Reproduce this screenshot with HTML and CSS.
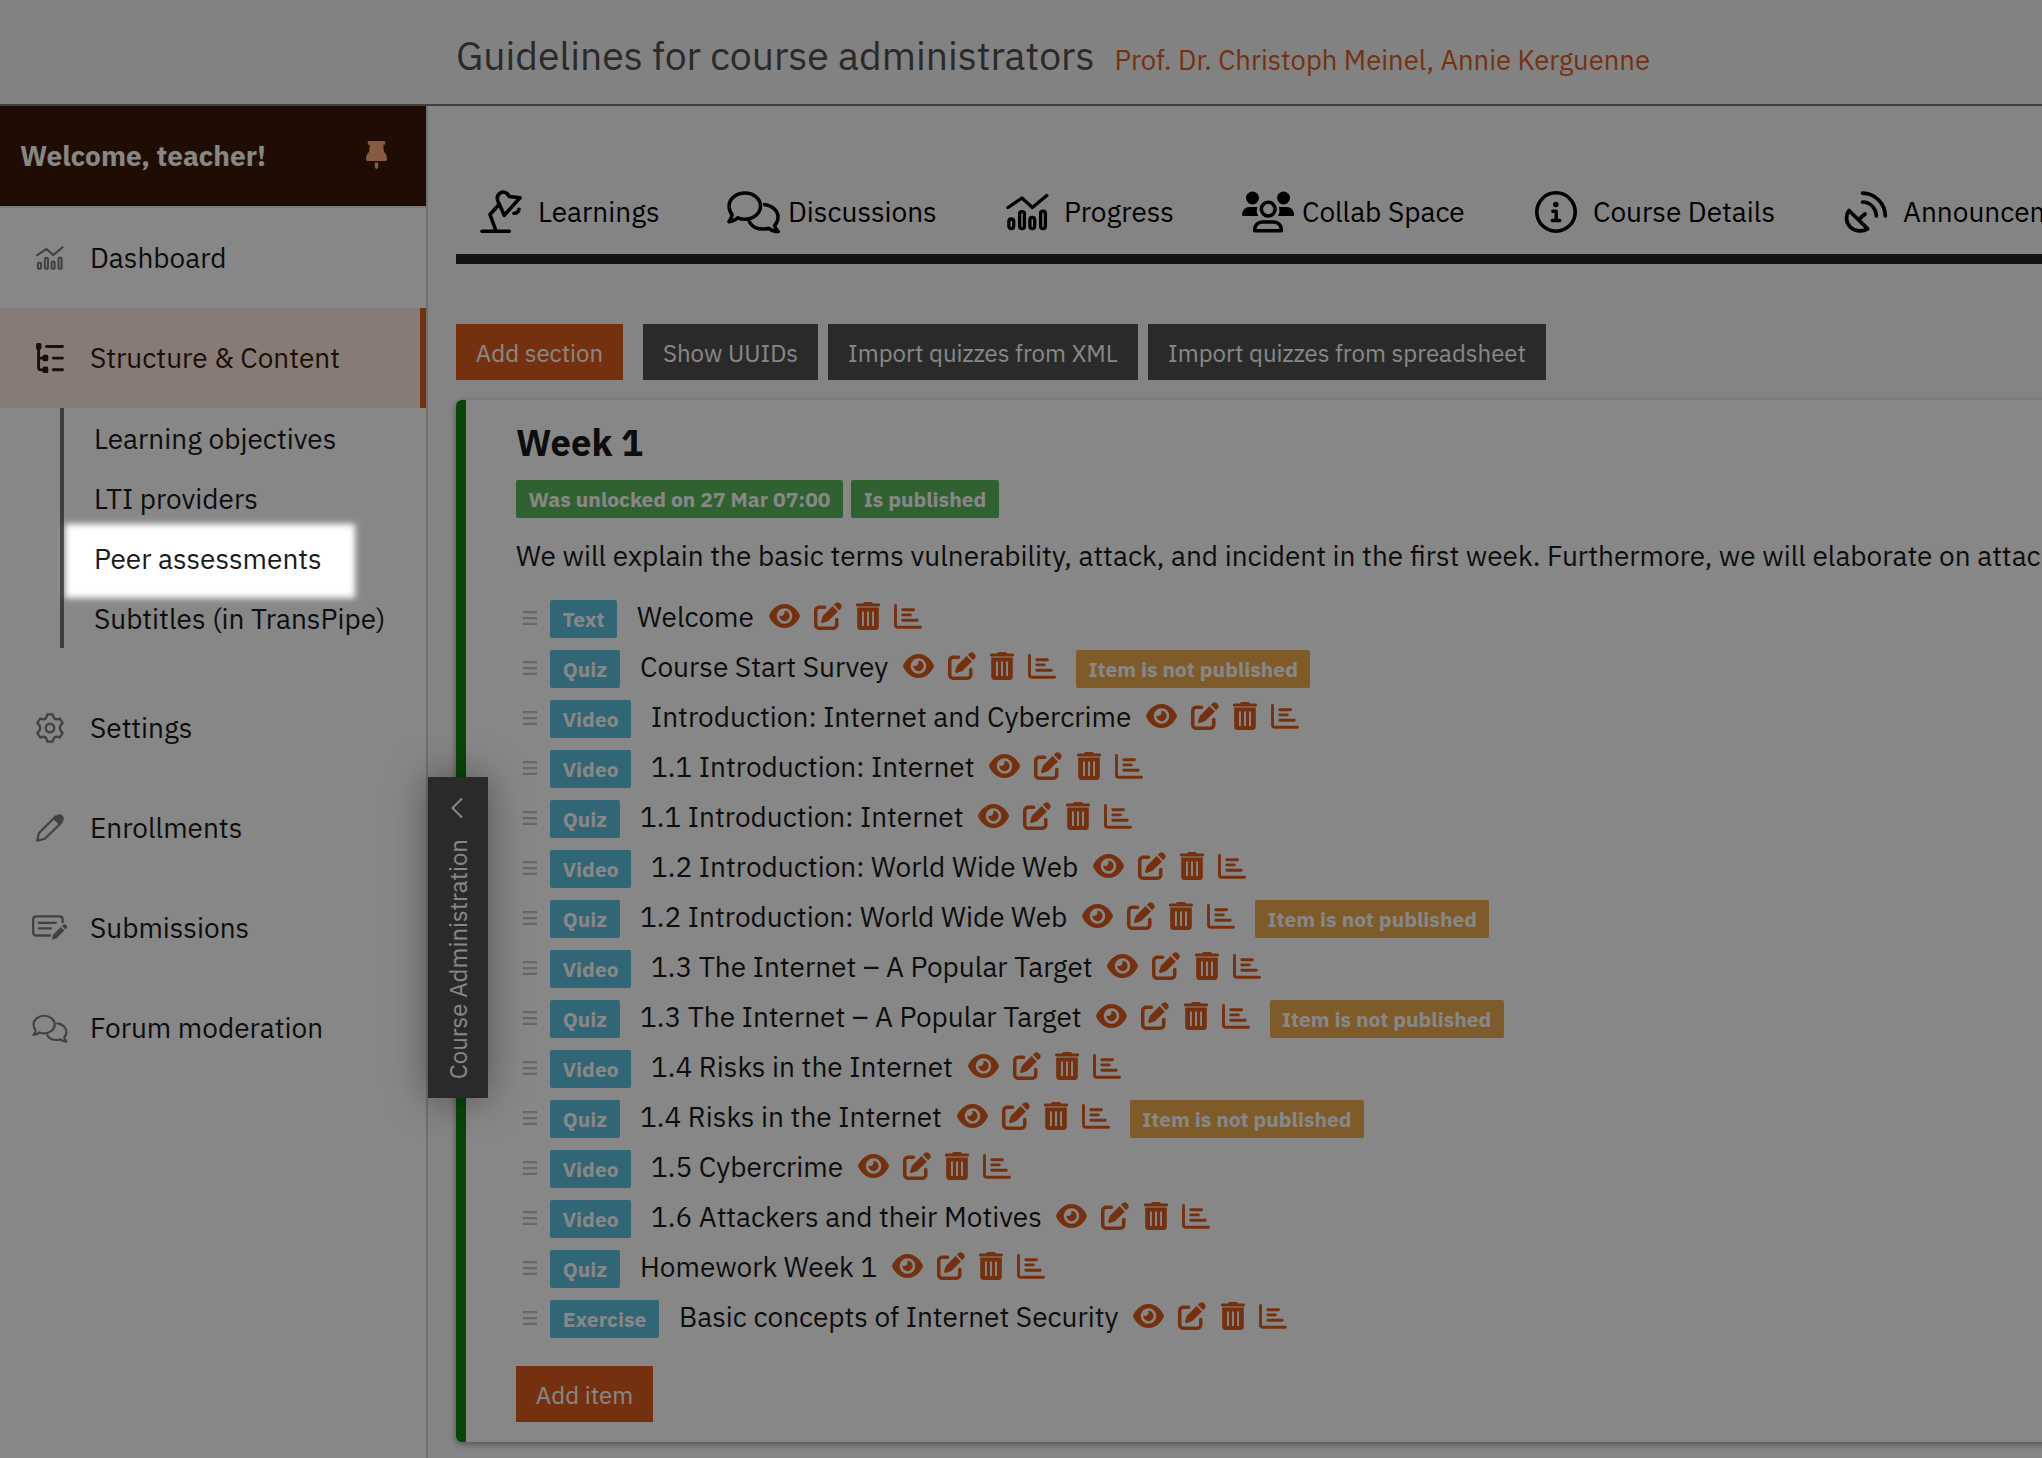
FILE: index.html
```html
<!DOCTYPE html>
<html lang="en">
<head>
<meta charset="utf-8">
<title>Guidelines for course administrators</title>
<link rel="stylesheet" href="styles.css">
</head>
<body>
<svg class="sprite" aria-hidden="true">
  <symbol id="i-eye" viewBox="0 0 576 512"><path d="M288 32c-80.8 0-145.5 36.8-192.6 80.6C48.6 156 17.3 208 2.5 243.7c-3.3 7.9-3.3 16.7 0 24.6C17.3 304 48.6 356 95.4 399.4C142.5 443.2 207.2 480 288 480s145.5-36.8 192.6-80.6c46.8-43.5 78.1-95.4 93-131.1c3.3-7.9 3.3-16.7 0-24.6c-14.9-35.7-46.2-87.7-93-131.1C433.5 68.8 368.8 32 288 32zM144 256a144 144 0 1 1 288 0 144 144 0 1 1 -288 0zm144-64c0 35.3-28.7 64-64 64c-7.1 0-13.9-1.2-20.3-3.3c-5.5-1.8-11.9 1.6-11.7 7.4c.3 6.9 1.3 13.8 3.2 20.7c13.7 51.2 66.4 81.6 117.6 67.9s81.6-66.4 67.9-117.6c-11.1-41.5-47.8-69.4-88.6-71.1c-5.8-.2-9.2 6.1-7.4 11.7c2.1 6.4 3.3 13.2 3.3 20.3z"/></symbol>
  <symbol id="i-edit" viewBox="0 0 512 512"><path d="M471.6 21.7c-21.9-21.9-57.3-21.9-79.2 0L362.3 51.7l97.9 97.9 30.1-30.1c21.9-21.9 21.9-57.3 0-79.2L471.6 21.7zm-299.2 220c-6.1 6.1-10.8 13.6-13.5 21.9l-29.6 88.8c-2.9 8.6-.6 18.1 5.8 24.6s15.9 8.7 24.6 5.8l88.8-29.6c8.2-2.7 15.7-7.4 21.9-13.5L437.7 172.3 339.7 74.3 172.4 241.7zM96 64C43 64 0 107 0 160V416c0 53 43 96 96 96H352c53 0 96-43 96-96V320c0-17.7-14.3-32-32-32s-32 14.3-32 32v96c0 17.7-14.3 32-32 32H96c-17.7 0-32-14.3-32-32V160c0-17.7 14.3-32 32-32h96c17.7 0 32-14.3 32-32s-14.3-32-32-32H96z"/></symbol>
  <symbol id="i-trash" viewBox="0 0 24 28"><path fill-rule="evenodd" d="M8.600 0h6.800q.9 0 1.200.7l.4.8h5.700a1.300 1.300 0 0 1 0 2.900H1.300a1.300 1.300 0 0 1 0-2.900H7l.4-.8Q7.700 0 8.600 0zM1.200 5.600h21.600V24.500a3.500 3.500 0 0 1-3.500 3.500H4.700a3.500 3.500 0 0 1-3.500-3.500zM6 9.500v14.500h1.900V9.500zM11.050 9.500v14.500h1.900V9.500zM16.100 9.500v14.500h1.900V9.500z"/></symbol>
  <symbol id="i-bars" viewBox="0 0 28 25"><path fill="none" stroke="currentColor" stroke-width="2.900" stroke-linecap="round" stroke-linejoin="round" d="M1.500 1.500V21q0 2.300 2.300 2.300H26.500M8.800 5.700H19.500M8.800 10.900H16.300M8.800 16.300H23.300"/></symbol>
  <symbol id="i-handle" viewBox="0 0 14 14"><path d="M0 0h14v2.300H0zM0 5.900h14v2.300H0zM0 11.700h14V14H0z"/></symbol>
  <symbol id="i-chart" viewBox="0 0 43 40"><g fill="none" stroke="currentColor" stroke-linecap="round" stroke-linejoin="round"><path d="M2 15.500L16 6l10.300 9.500L40.800 3.500"/><rect x="2.900" y="27" width="4.800" height="9.600" rx="2.400"/><rect x="13.600" y="19.700" width="4.800" height="16.900" rx="2.400"/><rect x="23.900" y="25.500" width="4.800" height="11.100" rx="2.400"/><rect x="34.600" y="19.200" width="4.800" height="17.400" rx="2.400"/></g></symbol>
  <symbol id="i-chat" viewBox="0 0 54 44"><g fill="none" stroke="currentColor" stroke-linecap="round" stroke-linejoin="round"><path d="M18.200 2.700C27 2.700 34.200 8.600 34.200 16S27 29.300 18.200 29.300c-2.600 0-5-.5-7.100-1.400C8.700 30.100 5.500 31.600 2 31.800c1.800-2.100 3-4.600 3.200-7C3.200 22.400 2.100 19.300 2.100 16 2.100 8.600 9.400 2.700 18.200 2.700z"/><path d="M38.200 14.300C46 15.400 52 20.700 52 27.300c0 3.200-1.300 6-3.500 8.300.4 2.400 1.700 4.600 3.600 6.300-3.700 0-7-1.200-9.500-3.300-1.800.6-3.400.8-5.200.8-6.500 0-12.200-2.600-14.500-7.300"/></g></symbol>
  <symbol id="i-lamp" viewBox="0 0 42 44"><path fill="none" stroke="currentColor" stroke-width="3.600" stroke-linecap="round" stroke-linejoin="round" d="M2 41.300H29.300M15.700 40L10 24.500l9.300-10.300M24.300 25.300L18.500 12.500C16.500 8.500 17.500 5 20 3.200c3.300-2.300 7-1 9.300 3.300L40 7.800 24.300 25.300M39 19.200C38.500 22 36.500 23.300 34 23.200"/></symbol>
  <symbol id="i-group" viewBox="0 0 54 44"><circle cx="10.700" cy="7.700" r="6.600"/><circle cx="42.300" cy="7.700" r="6.600"/><path d="M.2 26v-1.500C.2 20.200 3.400 17 7.600 17h8.200c-1.300 3.200-.9 6.600.9 9zM53 26v-1.500c0-4.300-3.200-7.500-7.400-7.500h-8.200c1.300 3.200.9 6.600-.9 9z"/><g fill="none" stroke="currentColor" stroke-width="3.600" stroke-linejoin="round"><circle cx="26.700" cy="19" r="7"/><path d="M12.900 41.200v-1.500c0-4.200 3.300-7.500 7.500-7.500h12.200c4.200 0 7.500 3.300 7.500 7.500v1.500z"/></g></symbol>
  <symbol id="i-info" viewBox="0 0 42 44"><circle cx="21" cy="22" r="19.200" fill="none" stroke="currentColor" stroke-width="3.600"/><circle cx="20.800" cy="14.500" r="2.700"/><path fill="none" stroke="currentColor" stroke-width="3.400" stroke-linecap="round" stroke-linejoin="round" d="M17.800 21.300h3.400v9M17.300 30.500h7.400"/></symbol>
  <symbol id="i-dish" viewBox="0 0 44 44"><path fill="none" stroke="currentColor" stroke-width="3.700" stroke-linecap="round" stroke-linejoin="round" d="M18.600 3.200A23 23 0 0 1 41.300 26M18.600 12A14 14 0 0 1 32.300 26M5 20.500C1.500 25.500 1.700 32.500 6.200 37c4.600 4.500 12 5.200 17.500 1.900zM14.800 29.500L21 24"/></symbol>
  <symbol id="i-tree" viewBox="0 0 28 30"><rect x="0" y="0" width="5.400" height="6.500" rx="1.500"/><rect x="6.500" y="11.800" width="5.800" height="6.400" rx="1.500"/><rect x="6.500" y="23.600" width="5.800" height="6.400" rx="1.500"/><path fill="none" stroke="currentColor" stroke-width="2.900" stroke-linecap="round" d="M2.600 4V24.500q0 2.400 2.400 2.400H8M2.600 15.100H8M10.500 3.500H26.500M17.300 15.100H26.500M17.300 26.700H26.500"/></symbol>
  <symbol id="i-gear" viewBox="0 0 28 30"><g fill="none" stroke="currentColor" stroke-width="2.400" stroke-linejoin="round"><circle cx="14" cy="15" r="4.300"/><path d="M11.300 1.400h5.400q.6 3.600 2.200 4.500t4.900-.4l2.800 4.700Q23.700 12.600 23.700 15t2.900 4.800l-2.800 4.700q-3.300-1.300-4.900-.4t-2.200 4.500h-5.400q-.6-3.600-2.200-4.500t-4.900.4L1.400 19.800Q4.300 17.400 4.300 15T1.400 10.200l2.800-4.700q3.300 1.300 4.900.4t2.200-4.500z"/></g></symbol>
  <symbol id="i-pencil" viewBox="0 0 28 28"><path fill="none" stroke="currentColor" stroke-width="2.200" stroke-linejoin="round" d="M1.200 26.800l1.600-7.600L19.500 2.500l6 6L8.800 24.700z"/><path d="M17 4.800L20.500 1.500C22-.2 24.500-.2 26 1.300l.7.700c1.500 1.500 1.500 4 0 5.500L23 11z"/></symbol>
  <symbol id="i-note" viewBox="0 0 36 26"><path fill="none" stroke="currentColor" stroke-width="2.300" stroke-linecap="round" d="M18 20.500H4.300Q1.200 20.500 1.200 17.500V4.300Q1.200 1.300 4.300 1.300H27.500Q30.600 1.300 30.600 4.300V7M6.700 7.800H24M6.700 13.300H19"/><path d="M19.800 24.800l1-4.800 8-8 3.600 3.600-8 8zM29.900 10.900l.9-.9c1-1 2.300-1 3.200-.1l.5.500c.9.9.9 2.200-.1 3.200l-.9.900z"/></symbol>
  <symbol id="i-pin" viewBox="0 0 21 28"><path d="M3 0h15q1.300 0 1.300 1.300v1.100q0 1.300-1.300 1.300h-.7l.5 7.100Q21 13.500 21 17.500v1q0 1.400-1.400 1.400H1.400Q0 19.900 0 18.500v-1q0-4 3.200-6.700l.5-7.100H3Q1.700 3.700 1.700 2.400V1.300Q1.700 0 3 0zM8.800 21.500h3.400v4.700q0 1.300-1.700 1.800-1.700-.5-1.700-1.800z"/></symbol>
  <symbol id="i-left" viewBox="0 0 12 20"><path fill="none" stroke="currentColor" stroke-width="2" stroke-linecap="round" stroke-linejoin="round" d="M10.500 1L1.500 10l9 9"/></symbol>
</svg>

<header class="topbar">
  <h1 class="topbar-title">Guidelines for course administrators</h1>
  <span class="topbar-teachers">Prof. Dr. Christoph Meinel, Annie Kerguenne</span>
</header>

<div class="layout">
  <aside class="sidebar">
    <div class="welcome"><span class="welcome-text">Welcome, teacher!</span><svg class="pin"><use href="#i-pin"/></svg></div>
    <nav class="side-nav">
      <a class="side-item"><span class="side-icon"><svg class="ic-chart"><use href="#i-chart"/></svg></span><span class="side-label">Dashboard</span></a>
      <a class="side-item active"><span class="side-icon"><svg class="ic-tree"><use href="#i-tree"/></svg></span><span class="side-label">Structure &amp; Content</span></a>
      <div class="side-sub">
        <a>Learning objectives</a>
        <a>LTI providers</a>
        <a>Peer assessments</a>
        <a>Subtitles (in TransPipe)</a>
      </div>
      <a class="side-item"><span class="side-icon"><svg class="ic-gear"><use href="#i-gear"/></svg></span><span class="side-label">Settings</span></a>
      <a class="side-item"><span class="side-icon"><svg class="ic-pencil"><use href="#i-pencil"/></svg></span><span class="side-label">Enrollments</span></a>
      <a class="side-item"><span class="side-icon"><svg class="ic-note"><use href="#i-note"/></svg></span><span class="side-label">Submissions</span></a>
      <a class="side-item"><span class="side-icon"><svg class="ic-chat"><use href="#i-chat"/></svg></span><span class="side-label">Forum moderation</span></a>
    </nav>
    <div class="drawer-tab"><svg class="drawer-arrow"><use href="#i-left"/></svg><span class="drawer-text">Course Administration</span></div>
  </aside>

  <main class="content">
    <nav class="tabs">
      <a class="tab tab-learnings"><svg><use href="#i-lamp"/></svg><span>Learnings</span></a>
      <a class="tab tab-discussions"><svg><use href="#i-chat"/></svg><span>Discussions</span></a>
      <a class="tab tab-progress"><svg><use href="#i-chart"/></svg><span>Progress</span></a>
      <a class="tab tab-collab"><svg><use href="#i-group"/></svg><span>Collab Space</span></a>
      <a class="tab tab-details"><svg><use href="#i-info"/></svg><span>Course Details</span></a>
      <a class="tab tab-news"><svg><use href="#i-dish"/></svg><span>Announcements</span></a>
    </nav>

    <div class="actions">
      <button class="btn btn-primary btn-add">Add section</button>
      <button class="btn b-uuid">Show UUIDs</button>
      <button class="btn b-xml">Import quizzes from XML</button>
      <button class="btn b-sheet">Import quizzes from spreadsheet</button>
    </div>

    <section class="card">
      <h2 class="card-title">Week 1</h2>
      <div class="badges"><span class="badge b-unlocked">Was unlocked on 27 Mar 07:00</span><span class="badge b-published">Is published</span></div>
      <p class="card-text">We will explain the basic terms vulnerability, attack, and incident in the first week. Furthermore, we will elaborate on attack</p>
      <ul class="items">
        <li class="item"><svg class="handle"><use href="#i-handle"/></svg><span class="kind text">Text</span><span class="name">Welcome</span><svg class="eye"><use href="#i-eye"/></svg><svg class="edit"><use href="#i-edit"/></svg><svg class="trash"><use href="#i-trash"/></svg><svg class="bars"><use href="#i-bars"/></svg></li>
        <li class="item"><svg class="handle"><use href="#i-handle"/></svg><span class="kind quiz">Quiz</span><span class="name">Course Start Survey</span><svg class="eye"><use href="#i-eye"/></svg><svg class="edit"><use href="#i-edit"/></svg><svg class="trash"><use href="#i-trash"/></svg><svg class="bars"><use href="#i-bars"/></svg><span class="unpublished">Item is not published</span></li>
        <li class="item"><svg class="handle"><use href="#i-handle"/></svg><span class="kind video">Video</span><span class="name">Introduction: Internet and Cybercrime</span><svg class="eye"><use href="#i-eye"/></svg><svg class="edit"><use href="#i-edit"/></svg><svg class="trash"><use href="#i-trash"/></svg><svg class="bars"><use href="#i-bars"/></svg></li>
        <li class="item"><svg class="handle"><use href="#i-handle"/></svg><span class="kind video">Video</span><span class="name">1.1 Introduction: Internet</span><svg class="eye"><use href="#i-eye"/></svg><svg class="edit"><use href="#i-edit"/></svg><svg class="trash"><use href="#i-trash"/></svg><svg class="bars"><use href="#i-bars"/></svg></li>
        <li class="item"><svg class="handle"><use href="#i-handle"/></svg><span class="kind quiz">Quiz</span><span class="name">1.1 Introduction: Internet</span><svg class="eye"><use href="#i-eye"/></svg><svg class="edit"><use href="#i-edit"/></svg><svg class="trash"><use href="#i-trash"/></svg><svg class="bars"><use href="#i-bars"/></svg></li>
        <li class="item"><svg class="handle"><use href="#i-handle"/></svg><span class="kind video">Video</span><span class="name">1.2 Introduction: World Wide Web</span><svg class="eye"><use href="#i-eye"/></svg><svg class="edit"><use href="#i-edit"/></svg><svg class="trash"><use href="#i-trash"/></svg><svg class="bars"><use href="#i-bars"/></svg></li>
        <li class="item"><svg class="handle"><use href="#i-handle"/></svg><span class="kind quiz">Quiz</span><span class="name">1.2 Introduction: World Wide Web</span><svg class="eye"><use href="#i-eye"/></svg><svg class="edit"><use href="#i-edit"/></svg><svg class="trash"><use href="#i-trash"/></svg><svg class="bars"><use href="#i-bars"/></svg><span class="unpublished">Item is not published</span></li>
        <li class="item"><svg class="handle"><use href="#i-handle"/></svg><span class="kind video">Video</span><span class="name">1.3 The Internet – A Popular Target</span><svg class="eye"><use href="#i-eye"/></svg><svg class="edit"><use href="#i-edit"/></svg><svg class="trash"><use href="#i-trash"/></svg><svg class="bars"><use href="#i-bars"/></svg></li>
        <li class="item"><svg class="handle"><use href="#i-handle"/></svg><span class="kind quiz">Quiz</span><span class="name">1.3 The Internet – A Popular Target</span><svg class="eye"><use href="#i-eye"/></svg><svg class="edit"><use href="#i-edit"/></svg><svg class="trash"><use href="#i-trash"/></svg><svg class="bars"><use href="#i-bars"/></svg><span class="unpublished">Item is not published</span></li>
        <li class="item"><svg class="handle"><use href="#i-handle"/></svg><span class="kind video">Video</span><span class="name">1.4 Risks in the Internet</span><svg class="eye"><use href="#i-eye"/></svg><svg class="edit"><use href="#i-edit"/></svg><svg class="trash"><use href="#i-trash"/></svg><svg class="bars"><use href="#i-bars"/></svg></li>
        <li class="item"><svg class="handle"><use href="#i-handle"/></svg><span class="kind quiz">Quiz</span><span class="name">1.4 Risks in the Internet</span><svg class="eye"><use href="#i-eye"/></svg><svg class="edit"><use href="#i-edit"/></svg><svg class="trash"><use href="#i-trash"/></svg><svg class="bars"><use href="#i-bars"/></svg><span class="unpublished">Item is not published</span></li>
        <li class="item"><svg class="handle"><use href="#i-handle"/></svg><span class="kind video">Video</span><span class="name">1.5 Cybercrime</span><svg class="eye"><use href="#i-eye"/></svg><svg class="edit"><use href="#i-edit"/></svg><svg class="trash"><use href="#i-trash"/></svg><svg class="bars"><use href="#i-bars"/></svg></li>
        <li class="item"><svg class="handle"><use href="#i-handle"/></svg><span class="kind video">Video</span><span class="name">1.6 Attackers and their Motives</span><svg class="eye"><use href="#i-eye"/></svg><svg class="edit"><use href="#i-edit"/></svg><svg class="trash"><use href="#i-trash"/></svg><svg class="bars"><use href="#i-bars"/></svg></li>
        <li class="item"><svg class="handle"><use href="#i-handle"/></svg><span class="kind quiz">Quiz</span><span class="name">Homework Week 1</span><svg class="eye"><use href="#i-eye"/></svg><svg class="edit"><use href="#i-edit"/></svg><svg class="trash"><use href="#i-trash"/></svg><svg class="bars"><use href="#i-bars"/></svg></li>
        <li class="item"><svg class="handle"><use href="#i-handle"/></svg><span class="kind exercise">Exercise</span><span class="name">Basic concepts of Internet Security</span><svg class="eye"><use href="#i-eye"/></svg><svg class="edit"><use href="#i-edit"/></svg><svg class="trash"><use href="#i-trash"/></svg><svg class="bars"><use href="#i-bars"/></svg></li>
      </ul>
      <button class="btn btn-primary b-item">Add item</button>
    </section>
  </main>
</div>
<div class="spotlight"></div>
</body>
</html>
```
FILE: styles.css
```css
* { box-sizing: border-box; }
html, body { margin: 0; height: 1458px; overflow: hidden; }
body { position: relative; background: #f9f9f9; color: #1a1a1a; font-family: "IBM Plex Sans", Roboto, "Liberation Sans", sans-serif; font-size: 28px; }
svg { fill: currentColor; flex: none; display: block; overflow: visible; }
.sprite { position: absolute; width: 0; height: 0; }
h1, h2, p, ul { margin: 0; padding: 0; font-weight: 400; }
button { font-family: inherit; }

.topbar { height: 106px; padding-left: 456px; display: flex; align-items: baseline; gap: 20px; background: #f5f5f5; border-bottom: 2px solid #777; line-height: 112px; white-space: nowrap; }
.topbar-title { font-size: 39.2px; color: #505050; }
.topbar-teachers { font-size: 27.44px; color: #de5e1e; }

.layout { display: flex; height: 1352px; }
.sidebar { position: relative; flex: none; width: 428px; background: #fff; border-right: 2px solid #d2d2d2; }
.welcome { height: 100px; padding: 0 39px 0 20px; display: flex; align-items: center; justify-content: space-between; background: #3c1906; color: #fff; font-weight: 700; }
.welcome-text { padding-bottom: 1px; }
.pin { width: 21px; height: 28px; color: #ffab80; margin-bottom: 2px; }
.side-nav { border-top: 2px solid #e4e4e4; }
.side-item { display: flex; align-items: center; height: 100px; }
.side-icon { width: 90px; padding-left: 10px; display: flex; justify-content: center; color: #7c7c7c; }
.side-item.active { background: #fee9e0; border-right: 6px solid #de5e1e; color: #3c1906; }
.side-label { padding-bottom: 1px; }
.active .side-icon { color: #3c1906; }
.side-sub { margin: 0 0 30px 60px; border-left: 4px solid #777; }
.side-sub a { display: flex; align-items: center; height: 60px; padding: 0 0 0 30px; }
.ic-chart { width: 28px; height: 26px; stroke-width: 3.2; }
.ic-tree { width: 28px; height: 30px; }
.ic-gear { width: 28px; height: 30px; }
.ic-pencil { width: 28px; height: 28px; }
.ic-note { width: 36px; height: 26px; }
.ic-chat { width: 36px; height: 29px; stroke-width: 3.3; }
.drawer-tab { position: absolute; left: 428px; top: 671px; width: 60px; height: 321px; display: flex; flex-direction: column; align-items: center; background: #505050; color: #fff; box-shadow: 0 0 40px rgba(0,0,0,.4); padding-top: 21px; }
.drawer-arrow { width: 12px; height: 20px; margin-right: 3px; }
.drawer-text { margin-top: 21px; writing-mode: vertical-rl; transform: rotate(180deg); font-size: 24px; line-height: 60px; white-space: nowrap; }

.content { flex: 1; min-width: 0; padding: 48px 0 0 28px; overflow: hidden; }
.tabs { height: 110px; border-bottom: 10px solid #242424; display: flex; align-items: center; white-space: nowrap; color: #000; padding: 16px 0 0 24px; }
.tab { display: flex; align-items: center; flex: none; stroke-width: 3.6; }
.tab svg { height: 44px; }
.tab span { padding-bottom: 1px; }
.tab-learnings { width: 247px; gap: 16px; }
.tab-learnings svg, .tab-details svg { width: 42px; }
.tab-discussions { width: 279px; gap: 8px; }
.tab-discussions svg, .tab-collab svg { width: 53px; }
.tab-progress { width: 236px; gap: 15px; stroke-width: 3.3; }
.tab-progress svg { width: 43px; height: 40px; }
.tab-collab { width: 293px; gap: 7px; }
.tab-details { width: 309px; gap: 16px; }
.tab-news { gap: 15px; }
.tab-news svg { width: 44px; }

.actions { display: flex; gap: 10px; margin-top: 60px; }
.btn { height: 56px; padding: 1px 0 0; border: 0; background: #505050; color: #fff; font-size: 24px; text-align: center; }
.btn-primary { background: #de5e1e; }
.btn-add { width: 167px; margin-right: 10px; }
.b-uuid { width: 175px; }
.b-xml { width: 310px; }
.b-sheet { width: 398px; }
.b-item { width: 137px; margin-top: 25px; }

.card { margin-top: 20px; height: 1042px; width: 1700px; padding: 20px 0 0 50px; background: #fff; border-left: 10px solid #128212; border-radius: 6px; box-shadow: 0 2px 6px rgba(0,0,0,.4); }
.card-title { font-size: 36.4px; font-weight: 700; line-height: 46px; height: 60px; }
.badges { display: flex; gap: 8px; color: #fff; font-size: 21px; font-weight: 700; }
.badge { height: 38px; line-height: 38px; border-radius: 2px; background: #5cb85c; text-align: center; }
.b-unlocked { width: 327px; }
.b-published { width: 148px; }
.card-text { height: 73px; line-height: 76px; white-space: nowrap; }
.items { list-style: none; }
.item { display: flex; align-items: center; height: 50px; padding-left: 7px; color: #de5e1e; white-space: nowrap; }
.handle { width: 14px; height: 14px; color: #c4c4c4; margin: 3px 13px 0 0; }
.kind, .unpublished { height: 38px; margin-top: 6px; line-height: 38px; border-radius: 2px; background: #5bc0de; color: #fff; font-size: 21px; font-weight: 700; text-align: center; }
.kind { margin-right: 20px; }
.text { width: 67px; }
.quiz { width: 70px; }
.video { width: 81px; }
.exercise { width: 109px; }
.name { color: #1a1a1a; margin-right: 14.7px; }
.eye { width: 31px; height: 28px; margin-right: 14px; }
.edit { width: 28px; height: 28px; margin-right: 14.300px; }
.trash { width: 24px; height: 28px; margin-right: 14px; }
.bars { width: 28px; height: 25px; }
.unpublished { width: 234px; margin-left: 20px; background: #f0ad4e; }

/* dims the page and leaves a soft-edged window over one menu entry */
.spotlight { position: absolute; left: 57px; top: 516px; width: 306px; height: 90px; box-shadow: 0 0 0 4000px rgba(0,0,0,.47), inset 0 0 6px 8px rgba(0,0,0,.47); pointer-events: none; }
```
